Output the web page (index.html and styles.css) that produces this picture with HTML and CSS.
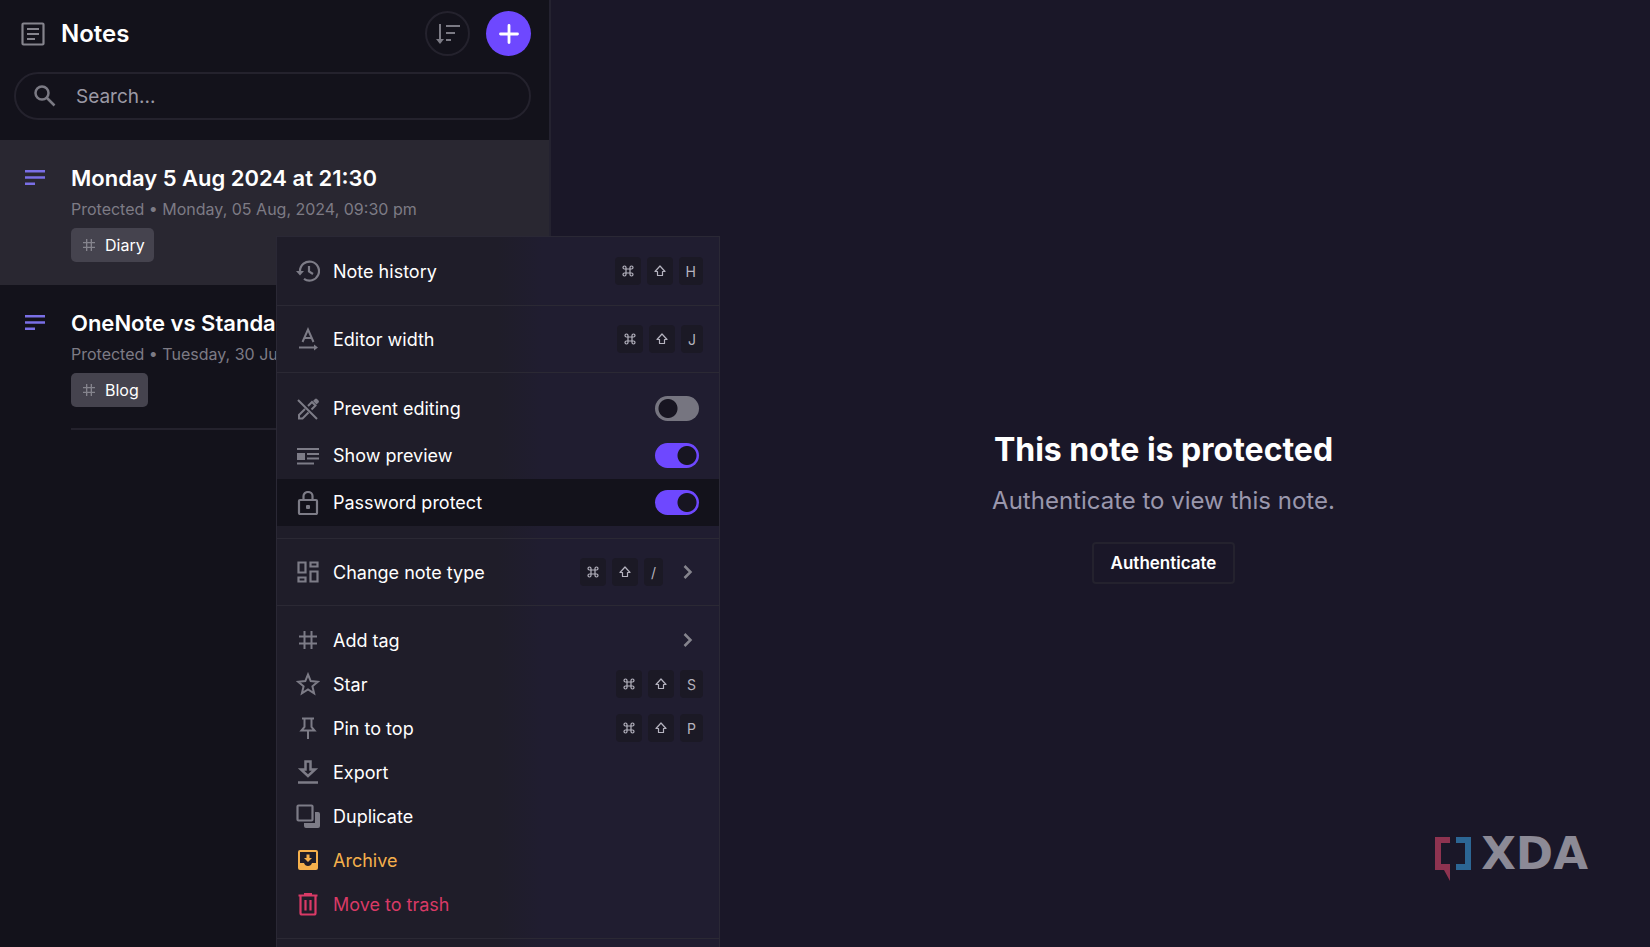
FILE: index.html
```html
<!DOCTYPE html>
<html lang="en">
<head>
    <meta charset="UTF-8">
    <title>Notes</title>
    <meta name="viewport" content="width=device-width, initial-scale=1">
    <link rel="stylesheet" href="styles.css">
</head>
<body>
    <svg class="sprite" aria-hidden="true">
        <symbol id="i-cmd" viewBox="0 0 12 12"><path d="M4 4h4v4H4zM4 4H2.500A1.500 1.500 0 1 1 4 2.500zM8 4V2.500A1.500 1.500 0 1 1 9.500 4zM8 8h1.500A1.500 1.500 0 1 1 8 9.500zM4 8v1.500A1.500 1.500 0 1 1 2.500 8z" fill="none" stroke="currentColor" stroke-width="1.200"/></symbol>
        <symbol id="i-shift" viewBox="0 0 12 12"><path d="M6 1L11 6.500H8.500V10.500H3.500V6.500H1z" fill="none" stroke="currentColor" stroke-width="1.200" stroke-linejoin="round"/></symbol>
        <symbol id="i-lines" viewBox="0 0 20 15"><path d="M0 1.200h20M0 7.500h20M0 13.800h10" fill="none" stroke="currentColor" stroke-width="2.400"/></symbol>
        <symbol id="i-hash" viewBox="0 0 24 24"><path d="M8.500 3v18M15.500 3v18M3 8.500h18M3 15.500h18" fill="none" stroke="currentColor" stroke-width="2"/></symbol>
        <symbol id="i-chevron" viewBox="0 0 10 16"><path d="M1.500 2l6 6-6 6" fill="none" stroke="currentColor" stroke-width="2.500"/></symbol>
    </svg>

    <div class="app">
        <aside class="sidebar">
            <header class="header">
                <svg class="header-icon" viewBox="0 0 24 24" fill="none" stroke="currentColor" stroke-width="2.200"><rect x="1.500" y="1.500" width="21" height="21" rx="1"/><path d="M6 7h12M6 12h12M6 17h8"/></svg>
                <h1>Notes</h1>
                <button class="round-button" aria-label="Sort">
                    <svg width="24" height="20" viewBox="0 0 24 20" fill="none" stroke="currentColor" stroke-width="2"><path d="M4 0v17M10 2h14M10 9h9M10 16h5"/><path d="M0 15h8l-4 5z" fill="currentColor" stroke="none"/></svg>
                </button>
                <button class="round-button add" aria-label="New note">
                    <svg width="20" height="20" viewBox="0 0 20 20" stroke="currentColor" stroke-width="2.800" stroke-linecap="round"><path d="M10 1.500v17M1.500 10h17"/></svg>
                </button>
            </header>
            <label class="search">
                <svg width="22" height="22" viewBox="0 0 22 22" fill="none" stroke="currentColor" stroke-width="2.500"><circle cx="8" cy="8" r="6.500"/><path d="M12.500 12.500l8 8"/></svg>
                <input type="text" placeholder="Search..." aria-label="Search">
            </label>

            <article class="note selected">
                <svg class="note-icon"><use href="#i-lines"/></svg>
                <div class="note-body">
                    <h2>Monday 5 Aug 2024 at 21:30</h2>
                    <p>Protected • Monday, 05 Aug, 2024, 09:30 pm</p>
                    <span class="tag"><svg><use href="#i-hash"/></svg>Diary</span>
                </div>
            </article>
            <article class="note">
                <svg class="note-icon"><use href="#i-lines"/></svg>
                <div class="note-body">
                    <h2>OneNote vs Standard</h2>
                    <p>Protected • Tuesday, 30 Jul</p>
                    <span class="tag"><svg><use href="#i-hash"/></svg>Blog</span>
                </div>
            </article>
        </aside>

        <main class="editor">
            <h2>This note is protected</h2>
            <p>Authenticate to view this note.</p>
            <button class="auth-button">Authenticate</button>
        </main>
    </div>

    <div class="menu">
        <div class="group wide">
            <button class="item">
                <svg class="icon" viewBox="0 0 24 24" fill="none" stroke="currentColor" stroke-width="2.200"><path d="M4 12a9.500 9.500 0 1 1 4 7.800"/><path d="M0 12h8l-4 4.500z" fill="currentColor" stroke="none"/><path d="M13 7v5.500l4 2.500"/></svg>
                <span class="label">Note history</span>
                <kbd><svg><use href="#i-cmd"/></svg></kbd><kbd><svg><use href="#i-shift"/></svg></kbd><kbd>H</kbd>
            </button>
        </div>
        <div class="group">
            <button class="item">
                <svg class="icon" viewBox="0 0 24 24" fill="none" stroke="currentColor" stroke-width="2"><path d="M6.500 15L12 2.500 17.500 15M8.500 11h7M3 20.500h16"/><path d="M18 17.500l4 3-4 3z" fill="currentColor" stroke="none"/></svg>
                <span class="label">Editor width</span>
                <kbd><svg><use href="#i-cmd"/></svg></kbd><kbd><svg><use href="#i-shift"/></svg></kbd><kbd>J</kbd>
            </button>
        </div>
        <div class="group wide">
            <label class="item toggle">
                <svg class="icon" viewBox="0 0 24 24" fill="none" stroke="currentColor" stroke-width="2"><path d="M2 3l19 19M9 12l-6 6v3.500h3.500l6-6M12 9l4-4 3.500 3.500-4 4"/><path d="M17 4l2-2q1-1 2 0l1.500 1.500q1 1 0 2l-2 2z" fill="currentColor" stroke="none"/></svg>
                <span class="label">Prevent editing</span>
                <input type="checkbox">
            </label>
            <label class="item toggle">
                <svg class="icon" viewBox="0 0 24 24" fill="none" stroke="currentColor" stroke-width="2.200"><path d="M1 5h22M11 10h12M11 14.500h12M1 19.500h17"/><path d="M1 9h8v7H1z" fill="currentColor" stroke="none"/></svg>
                <span class="label">Show preview</span>
                <input type="checkbox" checked>
            </label>
            <label class="item toggle active">
                <svg class="icon" viewBox="0 0 24 24" fill="none" stroke="currentColor" stroke-width="2.200"><rect x="3" y="9" width="18" height="14" rx="1"/><path d="M7.500 9V5a4.500 4 0 0 1 9 0V9"/><rect x="10" y="14" width="4" height="4" rx="1" fill="currentColor" stroke="none"/></svg>
                <span class="label">Password protect</span>
                <input type="checkbox" checked>
            </label>
        </div>
        <div class="group">
            <button class="item">
                <svg class="icon" viewBox="0 0 24 24" fill="none" stroke="currentColor" stroke-width="2.200"><path d="M2.500 2.500h7v10h-7zM14.500 2.500h7v4h-7zM2.500 17.500h7v4h-7zM14.500 11.500h7v10h-7z"/></svg>
                <span class="label">Change note type</span>
                <kbd><svg><use href="#i-cmd"/></svg></kbd><kbd><svg><use href="#i-shift"/></svg></kbd><kbd>/</kbd>
                <svg class="chevron"><use href="#i-chevron"/></svg>
            </button>
        </div>
        <div class="group wide">
            <button class="item">
                <svg class="icon"><use href="#i-hash"/></svg>
                <span class="label">Add tag</span>
                <svg class="chevron"><use href="#i-chevron"/></svg>
            </button>
            <button class="item">
                <svg class="icon" viewBox="0 0 24 24" fill="none" stroke="currentColor" stroke-width="2"><path d="M12 2.500l2.700 6.600 7.100.6-5.400 4.600 1.700 7-6.100-3.800-6.100 3.800 1.700-7-5.400-4.600 7.100-.6z"/></svg>
                <span class="label">Star</span>
                <kbd><svg><use href="#i-cmd"/></svg></kbd><kbd><svg><use href="#i-shift"/></svg></kbd><kbd>S</kbd>
            </button>
            <button class="item">
                <svg class="icon" viewBox="0 0 24 24" fill="none" stroke="currentColor" stroke-width="2"><path d="M6 2.500h12M8.500 2.500V11l-3 3.500h13l-3-3.500V2.500M12 14.500V23"/></svg>
                <span class="label">Pin to top</span>
                <kbd><svg><use href="#i-cmd"/></svg></kbd><kbd><svg><use href="#i-shift"/></svg></kbd><kbd>P</kbd>
            </button>
            <button class="item">
                <svg class="icon" viewBox="0 0 24 24" fill="none" stroke="currentColor" stroke-width="2.500"><path d="M9.500 1.500h5v8h4.500l-7 6.500-7-6.500h4.500zM2 22.500h20"/></svg>
                <span class="label">Export</span>
            </button>
            <button class="item">
                <svg class="icon" viewBox="0 0 24 24" fill="none" stroke="currentColor" stroke-width="2.200"><rect x="1.500" y="1.500" width="15" height="15" rx="1"/><path d="M19 8h3q2 0 2 2v12q0 2-2 2H10q-2 0-2-2v-3h11z" fill="currentColor" stroke="none"/></svg>
                <span class="label">Duplicate</span>
            </button>
            <button class="item archive">
                <svg class="icon" viewBox="0 0 24 24"><path fill="currentColor" fill-rule="evenodd" d="M4 2h16q2 0 2 2v16q0 2-2 2H4q-2 0-2-2V4q0-2 2-2zM4 4v11h4q1 3 4 3t4-3h4V4zM10.500 6.500h3V10H16l-4 4-4-4h2.500z"/></svg>
                <span class="label">Archive</span>
            </button>
            <button class="item trash">
                <svg class="icon" viewBox="0 0 24 24" fill="none" stroke="currentColor" stroke-width="2.200"><path d="M2.500 3.500h19M8 2h8M4.500 4v17q0 1.500 1.500 1.500h12q1.500 0 1.500-1.500V4M9.500 8v10.500M14.500 8v10.500"/></svg>
                <span class="label">Move to trash</span>
            </button>
        </div>
        <div class="group"></div>
    </div>

    <div class="watermark">
        <svg width="36" height="44" viewBox="0 0 36 44"><path fill="#8e3350" d="M0 0h15v6H6v21h9v17L9 33H0z"/><path fill="#2c6694" d="M21 0h15v33H21v-6h9V6h-9z"/></svg>
        <span>XDA</span>
    </div>
</body>
</html>
```

FILE: styles.css
```css
* {
    box-sizing: border-box;
}

body {
    margin: 0;
    height: 100vh;
    overflow: hidden;
    background-color: #1a1728;
    color: #fff;
    font-family: Inter, "Liberation Sans", sans-serif;
}

h1, h2, p {
    margin: 0;
}

button {
    font-family: inherit;
    cursor: pointer;
}

.sprite {
    position: absolute;
    width: 0;
    height: 0;
}

.app {
    display: flex;
    height: 100%;
}

/* sidebar */
.sidebar {
    flex: 0 0 551px;
    background-color: #13121b;
    border-right: 2px solid #242230;
}

.header {
    display: flex;
    align-items: center;
    gap: 16px;
    padding: 11px 18px 0 21px;
}

.header-icon {
    width: 24px;
    height: 24px;
    color: #85848d;
}

.header h1 {
    flex: 1;
    font-size: 24px;
    font-weight: 600;
}

.round-button {
    display: flex;
    align-items: center;
    justify-content: center;
    width: 45px;
    height: 45px;
    padding: 0;
    border: 2px solid #24222d;
    border-radius: 50%;
    background: none;
    color: #7b7a84;
}

.add {
    border: none;
    background-color: #6e48ff;
    color: #fff;
}

.search {
    display: flex;
    align-items: center;
    gap: 18px;
    height: 48px;
    margin: 16px 18px 20px 14px;
    padding: 0 18px;
    border: 2px solid #24222d;
    border-radius: 24px;
    color: #7b7a84;
}

.search input {
    flex: 1;
    border: none;
    outline: none;
    background: none;
    color: #fff;
    font: 19px Inter, sans-serif;
}

.search input::placeholder {
    color: #9b99a5;
}

.note {
    display: flex;
    gap: 26px;
    padding-left: 25px;
}

.selected {
    background-color: #292731;
}

.note-icon {
    width: 20px;
    height: 15px;
    margin-top: 30px;
    color: #7a6fe6;
}

.note-body {
    flex: 1;
    height: 145px;
    padding-top: 23px;
    border-bottom: 2px solid #24222d;
    white-space: nowrap;
}

.selected .note-body {
    border-color: transparent;
}

.note h2 {
    font-size: 22px;
    font-weight: 600;
    line-height: 30px;
}

.note p {
    margin-bottom: 2px;
    color: #7d7b85;
    font-size: 16px;
    line-height: 33px;
}

.tag {
    display: inline-flex;
    align-items: center;
    gap: 8px;
    height: 34px;
    padding: 0 9px 0 10px;
    border-radius: 5px;
    background-color: #45434e;
    font-size: 16px;
}

.tag svg {
    width: 16px;
    height: 16px;
    color: #85848d;
}

/* editor */
.editor {
    flex: 1;
    display: flex;
    flex-direction: column;
    align-items: center;
    justify-content: center;
    padding: 66px 0 0 126px;
}

.editor h2 {
    font-size: 32px;
    font-weight: 700;
    line-height: 40px;
}

.editor p {
    margin: 14px 0 24px;
    color: #9a97ad;
    font-size: 24px;
    line-height: 34px;
}

.auth-button {
    height: 42px;
    padding: 0 17px;
    border: 2px solid #24222e;
    border-radius: 4px;
    background: none;
    color: #fff;
    font-size: 17px;
    font-weight: 600;
}

/* context menu */
.menu {
    position: absolute;
    top: 236px;
    left: 276px;
    width: 444px;
    border: 1px solid #2a2835;
    background: linear-gradient(90deg, #1f1d29 50%, #201d30 60%);
}

.group {
    padding: 11px 0;
}

.group + .group {
    border-top: 1px solid #2b2934;
}

.wide {
    padding: 12px 0;
}

.item {
    display: flex;
    align-items: center;
    width: 100%;
    height: 44px;
    padding: 0 16px 0 19px;
    border: none;
    background: none;
    color: #fff;
    font-size: 18px;
    text-align: left;
}

.toggle {
    height: 47px;
    padding-right: 20px;
}

.active {
    background-color: #13121b;
}

.icon {
    width: 24px;
    height: 24px;
    margin-right: 13px;
    color: #7d7c87;
}

.label {
    flex: 1;
}

kbd {
    display: flex;
    align-items: center;
    justify-content: center;
    height: 28px;
    margin-left: 6px;
    padding: 0 7px;
    border-radius: 4px;
    background-color: #1b1925;
    color: #b5b3bf;
    font: 14px Inter, sans-serif;
}

kbd svg {
    width: 12px;
    height: 12px;
}

.chevron {
    width: 10px;
    height: 16px;
    margin: 0 10px 0 20px;
    color: #85848d;
}

.toggle input {
    appearance: none;
    width: 44px;
    height: 25px;
    margin: 0;
    border-radius: 13px;
    background: radial-gradient(circle at 13px, #171521 9px, #767580 10px);
}

.toggle input:checked {
    background: radial-gradient(circle at 32px, #171521 9px, #6e48ff 10px);
}

.archive, .archive .icon {
    color: #f5b04c;
}

.trash, .trash .icon {
    color: #d93a66;
}

.watermark {
    position: absolute;
    right: 62px;
    bottom: 66px;
    display: flex;
    align-items: flex-start;
    gap: 10px;
    color: #8c8a96;
    font: bold 45px/33px "DejaVu Sans", sans-serif;
}
```
